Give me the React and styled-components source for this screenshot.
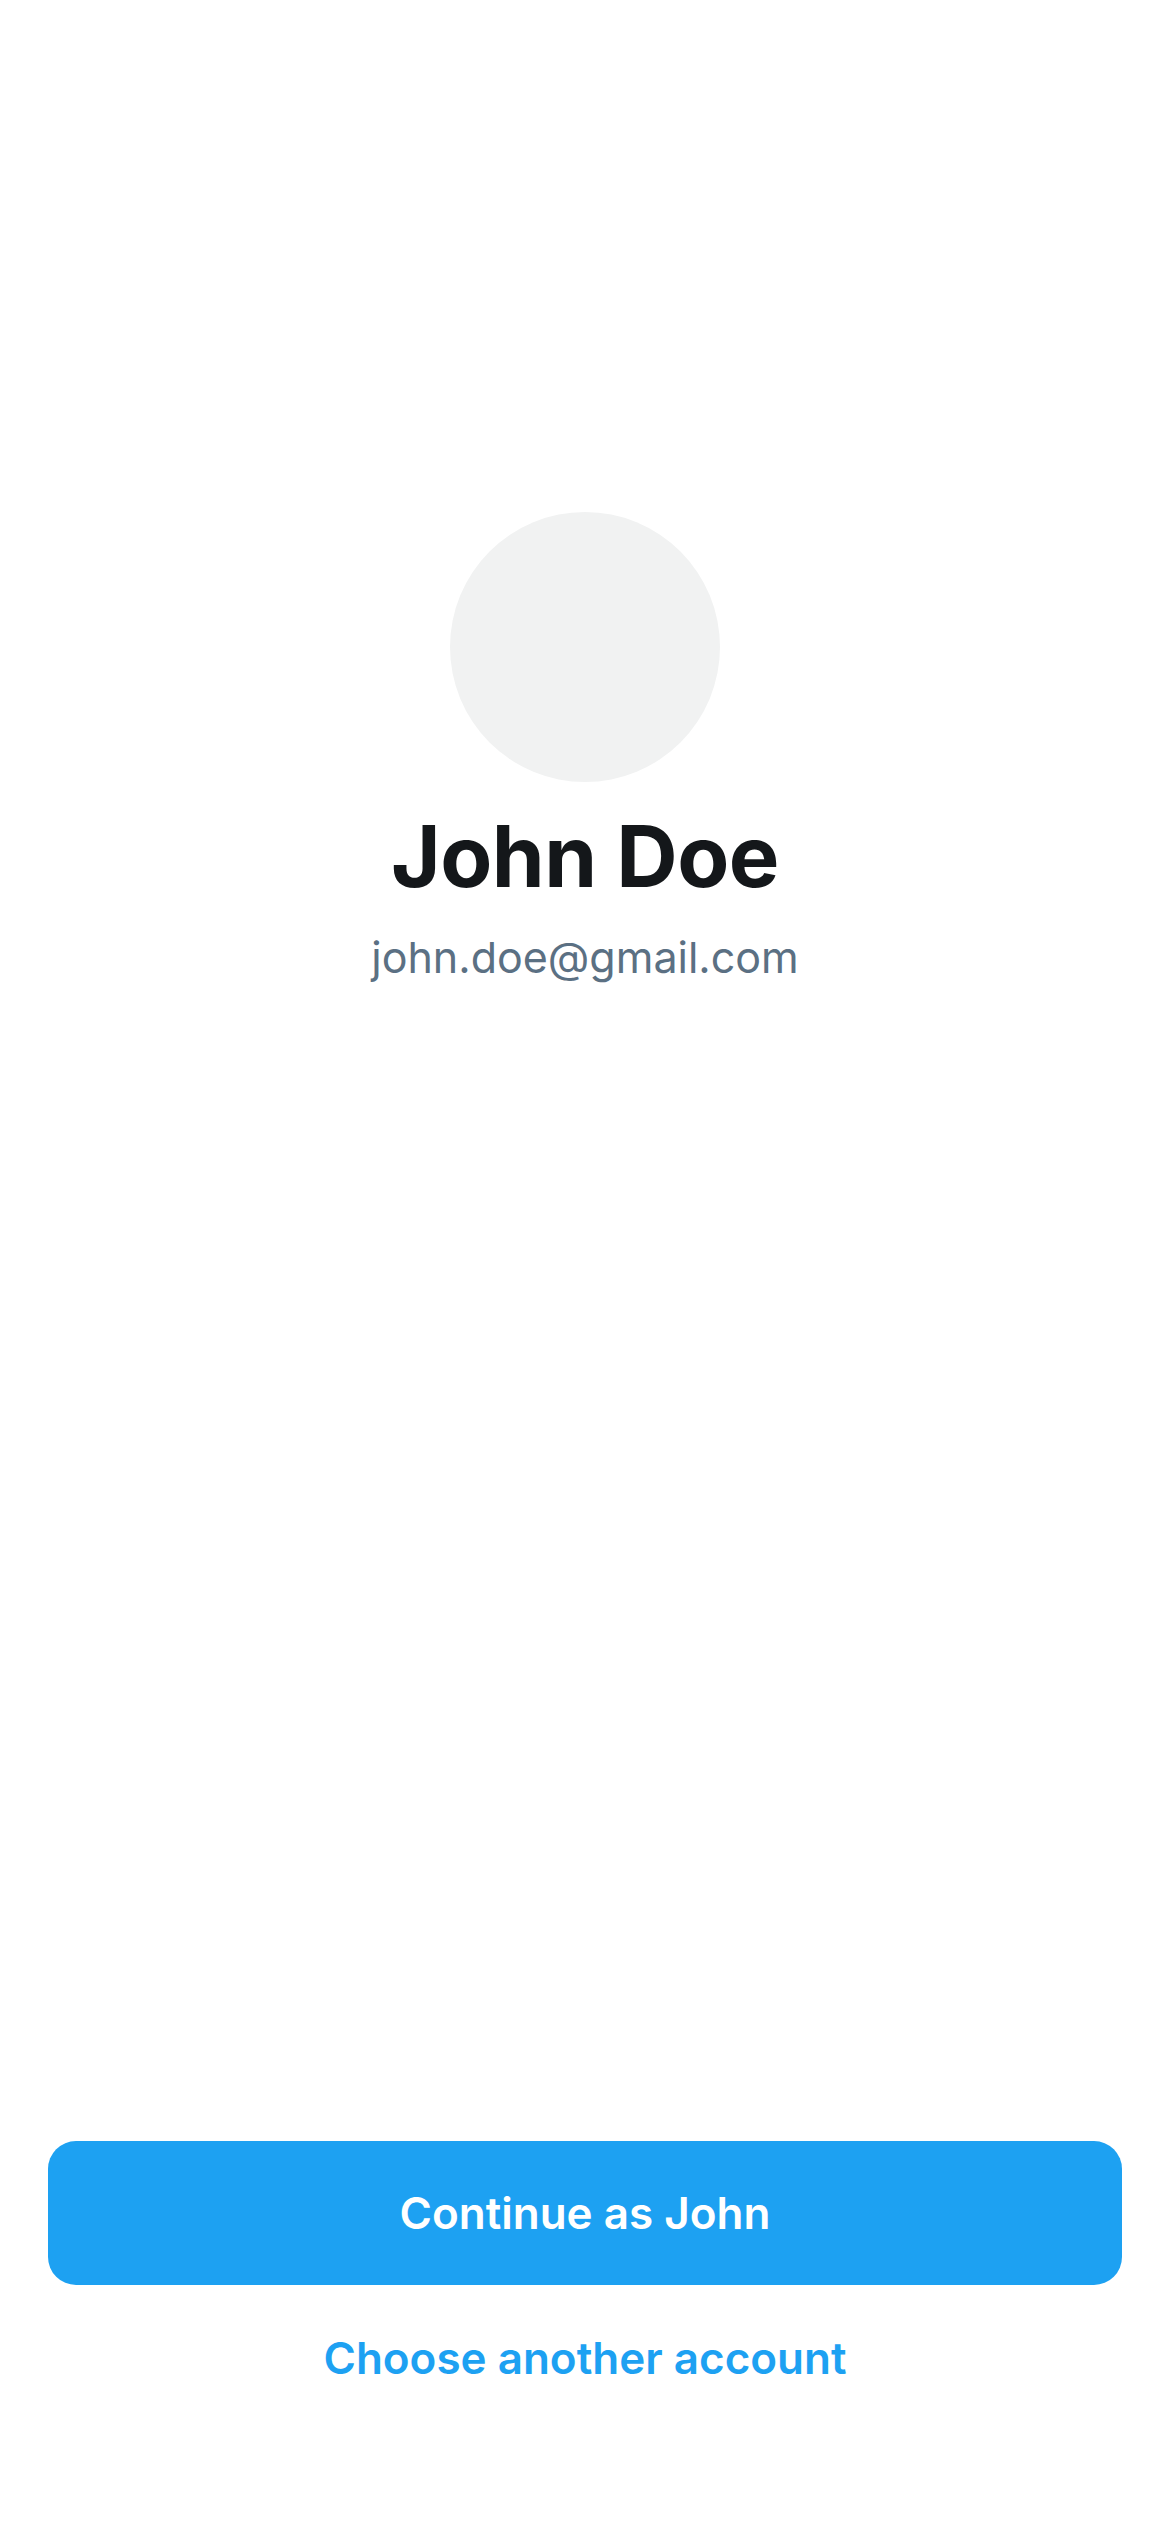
import React from "react";
import styled, { createGlobalStyle } from "styled-components";

const GlobalStyle = createGlobalStyle`
  * {
    box-sizing: border-box;
  }
  body {
    margin: 0;
    background: #ffffff;
    font-family: Inter, "Noto Sans", "Liberation Sans", sans-serif;
  }
`;

const Screen = styled.div`
  min-height: 2532px;
  display: flex;
  flex-direction: column;
  align-items: center;
  padding: 512px 48px 0 48px;
  background: #ffffff;
`;

const Profile = styled.div`
  display: flex;
  flex-direction: column;
  align-items: center;
  flex: 1;
`;

const Avatar = styled.div`
  width: 270px;
  height: 270px;
  border-radius: 50%;
  background: #f1f2f2;
`;

const Name = styled.h1`
  margin: 32px 0 0 0;
  font-size: 85px;
  line-height: 1;
  font-weight: 700;
  color: #14171a;
  letter-spacing: -0.5px;
`;

const Email = styled.p`
  margin: 37px 0 0 0;
  font-size: 43px;
  line-height: 1;
  font-weight: 400;
  color: #5b7083;
`;

const Actions = styled.div`
  width: 100%;
  display: flex;
  flex-direction: column;
  align-items: center;
  gap: 46px;
  padding-bottom: 147px;
`;

const PrimaryButton = styled.button`
  width: 100%;
  height: 144px;
  border: none;
  border-radius: 28px;
  background: #1da1f2;
  color: #ffffff;
  font-family: inherit;
  font-size: 44px;
  font-weight: 600;
  cursor: pointer;
`;

const LinkButton = styled.button`
  border: none;
  background: none;
  padding: 0;
  color: #1da1f2;
  font-family: inherit;
  font-size: 44px;
  font-weight: 600;
  cursor: pointer;
`;

export default function App() {
  return (
    <>
      <GlobalStyle />
      <Screen>
        <Profile>
          <Avatar />
          <Name>John Doe</Name>
          <Email>john.doe@gmail.com</Email>
        </Profile>
        <Actions>
          <PrimaryButton>Continue as John</PrimaryButton>
          <LinkButton>Choose another account</LinkButton>
        </Actions>
      </Screen>
    </>
  );
}
